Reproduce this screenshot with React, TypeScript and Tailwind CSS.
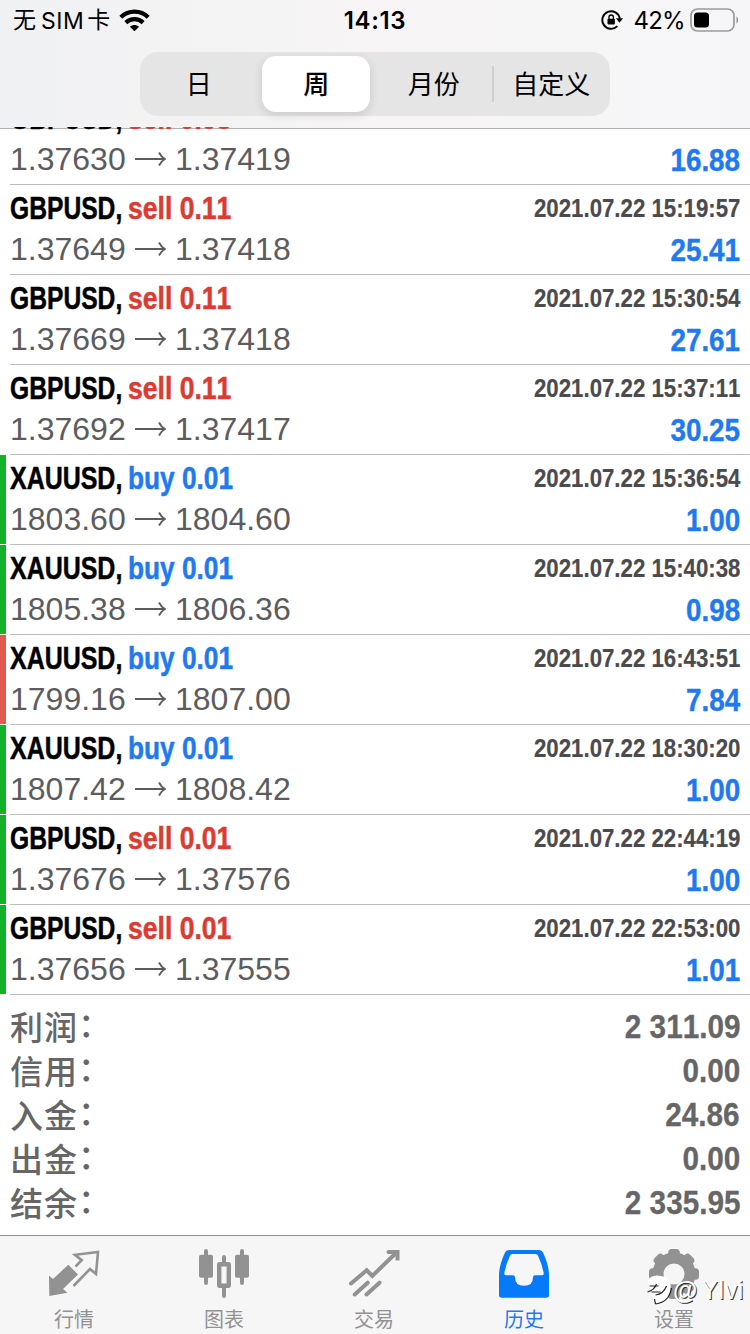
import React, { useState } from 'react';

type Deal = {
  symbol: string;
  side: 'buy' | 'sell';
  volume: string;
  open: string;
  close: string;
  time: string;
  profit: string;
  mark?: 'tp' | 'sl';
};

const deals: Deal[] = [
  { symbol: 'GBPUSD', side: 'sell', volume: '0.08', open: '1.37630', close: '1.37419', time: '', profit: '16.88' },
  { symbol: 'GBPUSD', side: 'sell', volume: '0.11', open: '1.37649', close: '1.37418', time: '2021.07.22 15:19:57', profit: '25.41' },
  { symbol: 'GBPUSD', side: 'sell', volume: '0.11', open: '1.37669', close: '1.37418', time: '2021.07.22 15:30:54', profit: '27.61' },
  { symbol: 'GBPUSD', side: 'sell', volume: '0.11', open: '1.37692', close: '1.37417', time: '2021.07.22 15:37:11', profit: '30.25' },
  { symbol: 'XAUUSD', side: 'buy', volume: '0.01', open: '1803.60', close: '1804.60', time: '2021.07.22 15:36:54', profit: '1.00', mark: 'tp' },
  { symbol: 'XAUUSD', side: 'buy', volume: '0.01', open: '1805.38', close: '1806.36', time: '2021.07.22 15:40:38', profit: '0.98', mark: 'tp' },
  { symbol: 'XAUUSD', side: 'buy', volume: '0.01', open: '1799.16', close: '1807.00', time: '2021.07.22 16:43:51', profit: '7.84', mark: 'sl' },
  { symbol: 'XAUUSD', side: 'buy', volume: '0.01', open: '1807.42', close: '1808.42', time: '2021.07.22 18:30:20', profit: '1.00', mark: 'tp' },
  { symbol: 'GBPUSD', side: 'sell', volume: '0.01', open: '1.37676', close: '1.37576', time: '2021.07.22 22:44:19', profit: '1.00', mark: 'tp' },
  { symbol: 'GBPUSD', side: 'sell', volume: '0.01', open: '1.37656', close: '1.37555', time: '2021.07.22 22:53:00', profit: '1.01', mark: 'tp' },
];

const totals = [
  { label: '利润', value: '2 311.09' },
  { label: '信用', value: '0.00' },
  { label: '入金', value: '24.86' },
  { label: '出金', value: '0.00' },
  { label: '结余', value: '2 335.95' },
];

const periods = ['日', '周', '月份', '自定义'];

function StatusBar() {
  return (
    <div className="flex h-10 items-center justify-between pl-[13px] pr-[11px] text-black">
      <div className="flex w-[330px] items-center text-[23px] leading-10">
        <span>无</span>
        <span className="ml-[5px] mt-px tracking-[0.5px]">SIM</span>
        <span className="ml-[3px]">卡</span>
        <svg className="ml-[9px]" width="31" height="23" viewBox="0 0 31 23" fill="none" stroke="#000" strokeWidth="4.2">
          <path d="M1.8 8.2C9.5.8 21.5.8 29.2 8.2" />
          <path d="M6.8 13.6c5-4.6 12.400-4.6 17.400 0" />
          <path d="M10.900 17.800c2.700-2.500 6.500-2.500 9.200 0L15.500 22.300Z" fill="#000" stroke="none" />
        </svg>
      </div>
      <span className="-ml-[9px] mt-px text-[24px] font-semibold leading-10 tracking-[0.7px]">14:13</span>
      <div className="flex w-[323px] items-center justify-end">
        <svg width="22" height="22" viewBox="0 0 22 22" fill="none">
          <path d="M16.400 17.200A8.800 8.800 0 1 1 18.800 9.500" stroke="#000" strokeWidth="1.900" />
          <path d="M15 9.200h7l-3.500 4.600Z" fill="#000" />
          <rect x="6.500" y="9.800" width="7.400" height="5.600" rx="0.800" fill="#000" />
          <path d="M8 10V8.200a2.200 2.200 0 0 1 4.400 0V10" stroke="#000" strokeWidth="1.300" />
        </svg>
        <span className="ml-[10px] mt-px text-[24px] leading-10 tracking-[-0.7px]">42%</span>
        <svg className="ml-[5px]" width="49" height="24" viewBox="0 0 49 24" fill="none">
          <rect x="1" y="1" width="43" height="22" rx="6.500" stroke="#9b9b9d" strokeWidth="1.700" />
          <rect x="4" y="4.500" width="15" height="15" rx="3.500" fill="#000" />
          <path d="M46.500 8.500c2 1.200 2 5.800 0 7Z" fill="#8a8a8c" />
        </svg>
      </div>
    </div>
  );
}

function PeriodSwitch() {
  const [active, setActive] = useState<number>(1);

  return (
    <div className="mx-auto mt-3 grid h-[64px] w-[470px] grid-cols-4 rounded-[18px] bg-[#e6e5e6]">
      {periods.map((period, i) => (
        <button
          key={period}
          onClick={() => setActive(i)}
          className={`relative flex items-center justify-center text-[26px] text-black ${
            i === active ? 'font-medium' : ''
          }`}
        >
          {i === active && (
            <span className="absolute inset-y-1 left-1 right-[5px] rounded-[14px] bg-white shadow-[0_3px_10px_rgba(0,0,0,0.12)]" />
          )}
          {i === 3 && (
            <span className="absolute -left-px top-[14px] h-9 w-0.5 bg-[#cfcfd0]" />
          )}
          <span className="relative">{period}</span>
        </button>
      ))}
    </div>
  );
}

function DealRow({ deal }: { deal: Deal }) {
  const isBuy = deal.side === 'buy';
  return (
    <div className="flex h-[90px]">
      <div
        className={`h-[89px] w-1.5 ${deal.mark === 'tp' ? 'bg-[#12b32b]' : ''} ${
          deal.mark === 'sl' ? 'bg-[#e15a50]' : ''
        }`}
      />
      <div className="ml-1 flex flex-1 justify-between border-b border-[#bcbcbf] pr-[10px] pt-[3px] leading-10">
        <div className="whitespace-nowrap">
          <div className="flex h-[41px] text-[32px] font-bold [-webkit-text-stroke:0.5px]">
            <div className="w-[118px]">
              <span
                className={`inline-block origin-left text-black ${
                  isBuy ? 'scale-x-[0.78]' : 'scale-x-[0.77]'
                }`}
              >
                {deal.symbol},
              </span>
            </div>
            <span
              className={`inline-block origin-left ${
                isBuy
                  ? 'scale-x-[0.82] text-[#1f7af0]'
                  : 'scale-x-[0.83] text-[#da3c31]'
              }`}
            >
              {deal.side} {deal.volume}
            </span>
          </div>
          <div className="flex items-center text-[32px] text-[#5c5c5e]">
            <span className="w-[124px]">{deal.open}</span>
            <svg width="32" height="18" viewBox="0 0 32 18" fill="none" stroke="#5c5c5e" strokeWidth="1.800">
              <path d="M1 9h30M25 2.500q2 4.300 6 6.500-4 2.200-6 6.500" />
            </svg>
            <span className="ml-[9px]">{deal.close}</span>
          </div>
        </div>
        <div className="flex flex-col items-end whitespace-nowrap font-bold">
          <span className="mb-[2px] h-10 origin-right scale-x-[0.855] text-[26px] text-[#4b4b4d] [-webkit-text-stroke:0.2px]">
            {deal.time}
          </span>
          <span className="origin-right scale-x-[0.87] text-[32px] text-[#1f7af0] [-webkit-text-stroke:0.4px]">
            {deal.profit}
          </span>
        </div>
      </div>
    </div>
  );
}

function QuotesIcon() {
  return (
    <svg width="52" height="52" viewBox="0 0 52 52" fill="none">
      <path d="M1 27.500 5 31 20.300 16.700 30 26.500 15 41l4.500 3.800L1.300 48Z" fill="#929292" />
      <path d="m27.500 18.500 6.200-6.300L27 6.800 50 4l-2 22-6-5-16.500 17" stroke="#929292" strokeWidth="2.600" />
    </svg>
  );
}

function ChartIcon() {
  return (
    <svg width="52" height="52" viewBox="0 0 52 52" fill="none" stroke="#929292" strokeLinecap="round">
      <path d="M8 3v32M44 3v32M26 9v6M26 40v8" strokeWidth="4" />
      <rect x="1" y="6.700" width="14" height="23" rx="2" fill="#929292" stroke="none" />
      <rect x="37" y="6.700" width="14" height="23" rx="2" fill="#929292" stroke="none" />
      <rect x="21.200" y="16.200" width="9.600" height="21.600" rx="0.500" strokeWidth="4.400" />
    </svg>
  );
}

function TradeIcon() {
  return (
    <svg width="52" height="52" viewBox="0 0 52 52" fill="none" stroke="#929292" strokeWidth="4" strokeLinecap="round">
      <path d="M3 35.500 18.700 22.300l5.600 5.600L48.500 4.500" />
      <path d="M40.500 4h9v8.500" strokeLinecap="butt" />
      <path d="M40.500 4h2M19.700 34.700l-13 11.800M31.500 34.700l-13 11.800" />
    </svg>
  );
}

function HistoryIcon() {
  return (
    <svg width="52" height="52" viewBox="0 0 52 52">
      <path
        fill="#067bfa"
        fillRule="evenodd"
        d="M11 2h30q3 0 4 2.500 6 13 6 23V47q0 2.700-2.700 2.700H3.700Q1 49.700 1 47V27.500q0-10 6-23Q8 2 11 2ZM14.500 6q-1.800 0-2.500 1.700Q7.500 17 6.300 25.500q-.2 1.700 1.500 1.700H15q2 0 2 2 0 8.600 9 8.600t9-8.600q0-2 2-2h7.200q1.700 0 1.500-1.700Q44.500 17 40 7.700 39.300 6 37.500 6Z"
      />
    </svg>
  );
}

function SettingsIcon() {
  return (
    <svg width="52" height="52" viewBox="0 0 52 52" fill="none">
      <circle cx="26" cy="26" r="16" stroke="#929292" strokeWidth="11" />
      {[0, 45, 90, 135, 180, 225, 270, 315].map((angle) => (
        <rect key={angle} x="20.200" y="1" width="11.600" height="9" rx="3.500" fill="#929292" transform={`rotate(${angle} 26 26)`} />
      ))}
    </svg>
  );
}

const tabs = [
  { label: '行情', icon: <QuotesIcon /> },
  { label: '图表', icon: <ChartIcon /> },
  { label: '交易', icon: <TradeIcon /> },
  { label: '历史', icon: <HistoryIcon />, active: true },
  { label: '设置', icon: <SettingsIcon /> },
];

function Watermark() {
  return (
    <div className="absolute bottom-[29px] right-[6px] flex items-center text-white">
      <svg width="27" height="30" viewBox="0 0 26 30" fill="none">
        <path d="M1 7Q4-1 14 1q8 0 10 8 1 8-4 14-5 5-12 6l1-6q-2-1-3-4Z" fill="#fff" />
        <path d="M1 17q7-2 9-8M3 11h9M9 20q8-1 11-9M9 29q14-2 16-16M8 24l1 5M5 17h9" stroke="#222" strokeWidth="1.200" />
      </svg>
      <span className="text-[25px] leading-[30px] [text-shadow:1px_1px_0_#333]">
        <span className="font-bold">@</span>
        <span className="ml-1 tracking-[0.6px]">Ylvi</span>
      </span>
    </div>
  );
}

export default function App() {
  return (
    <div className="relative flex h-[1334px] w-[750px] flex-col overflow-hidden bg-white font-['Liberation_Sans','Noto_Sans_CJK_SC',sans-serif] [font-kerning:none]">
      <header className="h-[129px] shrink-0 border-b border-[#b1b1b4] bg-gradient-to-r from-[#f0f1f3] via-[#f7f5f5] to-[#f6f6f8] font-['Inter','Noto_Sans_CJK_SC',sans-serif]">
        <StatusBar />
        <PeriodSwitch />
      </header>

      {/* the list is scrolled, so the first row slides under the header */}
      <main className="relative -mt-[34px] flex-1 [clip-path:inset(32px_0_0_0)]">
        {deals.map((deal) => (
          <DealRow key={deal.profit + deal.open} deal={deal} />
        ))}
        <div className="px-[10px] pt-[10px] text-[#666]">
          {totals.map((total) => (
            <div key={total.label} className="flex h-11 justify-between leading-11">
              <div className="mt-[2px] flex text-[33px] font-medium">
                <span className="tracking-[1px]">{total.label}</span>
                <span className="-mt-[3px]">：</span>
              </div>
              <span className="origin-right scale-x-[0.9] text-[33px] font-bold [-webkit-text-stroke:0.3px]">
                {total.value}
              </span>
            </div>
          ))}
        </div>
      </main>

      <nav className="relative h-[99px] shrink-0 border-t border-[#929294] bg-[#f6f6f6]">
        <div className="-ml-px grid w-[750px] grid-cols-5 pt-3">
          {tabs.map((tab) => (
            <div key={tab.label} className="flex flex-col items-center">
              {tab.icon}
              <span
                className={`mt-[4px] font-['Noto_Sans_CJK_SC',sans-serif] text-[20px] leading-[30px] ${
                  tab.active ? 'text-[#1f7af0]' : 'text-[#929292]'
                }`}
              >
                {tab.label}
              </span>
            </div>
          ))}
        </div>
        <Watermark />
      </nav>
    </div>
  );
}
